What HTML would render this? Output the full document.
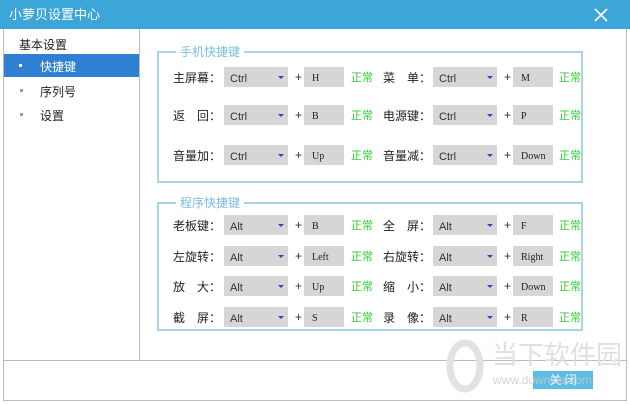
<!DOCTYPE html>
<html><head><meta charset="utf-8"><style>
*{margin:0;padding:0;box-sizing:border-box}
body{width:630px;height:404px;background:#fff;position:relative;overflow:hidden;font-family:"Liberation Sans","Noto Sans CJK SC",sans-serif;font-size:12px;color:#222}
.a{position:absolute}
.title{left:0;top:0;width:630px;height:29px;background:#3ba6d7;color:#fff;font-size:13px;line-height:29px;padding-left:9px}
.lbl{font-size:12px;color:#222;white-space:pre}
.f{display:flex;align-items:center;height:20px}
.sel{width:64px;background:#d6d6d6;font-size:11px;padding-left:6px;padding-top:3px;color:#333}
.sel:after{content:"";position:absolute;right:4px;top:9px;border:3px solid transparent;border-top:3px solid #3344bb;border-bottom:0;width:0}
.key{width:40px;background:#d6d6d6;font-family:"Liberation Serif",serif;font-size:10px;padding-left:8px;padding-top:2px;color:#222}
.ok{color:#2bd12b;font-size:11px}
.plus{font-size:12px;color:#333}
.grp{border:2px solid #a8d4ea}
.leg{background:#fff;color:#7bbde0;font-size:12px;padding:0 4px;line-height:14px}
</style></head><body>
<div class="a title">小萝贝设置中心</div>
<svg class="a" style="left:594px;top:8px" width="14" height="14"><path d="M1 1L13 13M13 1L1 13" stroke="#fff" stroke-width="1.6"/></svg>
<div class="a" style="left:3px;top:29px;width:1px;height:372px;background:#bbb"></div>
<div class="a" style="left:626px;top:29px;width:1px;height:372px;background:#bbb"></div>
<div class="a" style="left:3px;top:400px;width:624px;height:1px;background:#bbb"></div>
<div class="a" style="left:139px;top:29px;width:1px;height:332px;background:#bbb"></div>
<div class="a" style="left:3px;top:360px;width:624px;height:1px;background:#bbb"></div>
<div class="a lbl" style="left:19px;top:36px">基本设置</div>
<div class="a" style="left:4px;top:54px;width:135px;height:23px;background:#2f7fd2"></div>
<div class="a" style="left:19px;top:64px;width:3px;height:3px;background:#fff"></div>
<div class="a lbl" style="left:40px;top:58px;color:#fff">快捷键</div>
<div class="a" style="left:20px;top:89px;width:3px;height:3px;background:#999"></div>
<div class="a lbl" style="left:40px;top:83px">序列号</div>
<div class="a" style="left:20px;top:113px;width:3px;height:3px;background:#999"></div>
<div class="a lbl" style="left:40px;top:107px">设置</div>

<div class="a grp" style="left:157px;top:51px;width:426px;height:132px"></div>
<div class="a leg" style="left:176px;top:45px">手机快捷键</div>
<div class="a grp" style="left:157px;top:202px;width:426px;height:129px"></div>
<div class="a leg" style="left:176px;top:196px">程序快捷键</div>

<div id="rows"></div>
<svg class="a" style="left:445px;top:338px" width="40" height="60"><ellipse cx="20" cy="28" rx="15" ry="23" fill="none" stroke="#e2e2e2" stroke-width="7"/></svg>
<div class="a" style="left:533px;top:371px;width:60px;height:18px;background:#5bbde6;color:#fff;font-size:12px;line-height:18px;text-align:center">关 闭</div>
<div class="a" style="left:492px;top:340px;font-size:26px;line-height:30px;color:#e0e0e0;white-space:nowrap">当下软件园</div>
<div class="a" style="left:493px;top:373px;font-size:12px;color:rgba(200,200,200,0.8);white-space:nowrap">www.downxia.com</div>
<script>
var rows=[
[77,"主屏幕：","Ctrl","H","菜　单：","Ctrl","M"],
[115,"返　回：","Ctrl","B","电源键：","Ctrl","P"],
[155,"音量加：","Ctrl","Up","音量减：","Ctrl","Down"],
[225,"老板键：","Alt","B","全　屏：","Alt","F"],
[256,"左旋转：","Alt","Left","右旋转：","Alt","Right"],
[286,"放　大：","Alt","Up","缩　小：","Alt","Down"],
[317,"截　屏：","Alt","S","录　像：","Alt","R"]];
var h="";
rows.forEach(function(r){var y=r[0]-10;
[[173,224,295,304,351,1],[383,433,504,513,559,4]].forEach(function(c){var i=c[5];
h+='<div class="a f lbl" style="left:'+c[0]+'px;top:'+y+'px">'+r[i]+'</div>';
h+='<div class="a f sel" style="left:'+c[1]+'px;top:'+y+'px">'+r[i+1]+'</div>';
h+='<div class="a f plus" style="left:'+c[2]+'px;top:'+y+'px">+</div>';
h+='<div class="a f key" style="left:'+c[3]+'px;top:'+y+'px">'+r[i+2]+'</div>';
h+='<div class="a f ok" style="left:'+c[4]+'px;top:'+y+'px">正常</div>';});});
document.getElementById("rows").innerHTML=h;
</script>
</body></html>
